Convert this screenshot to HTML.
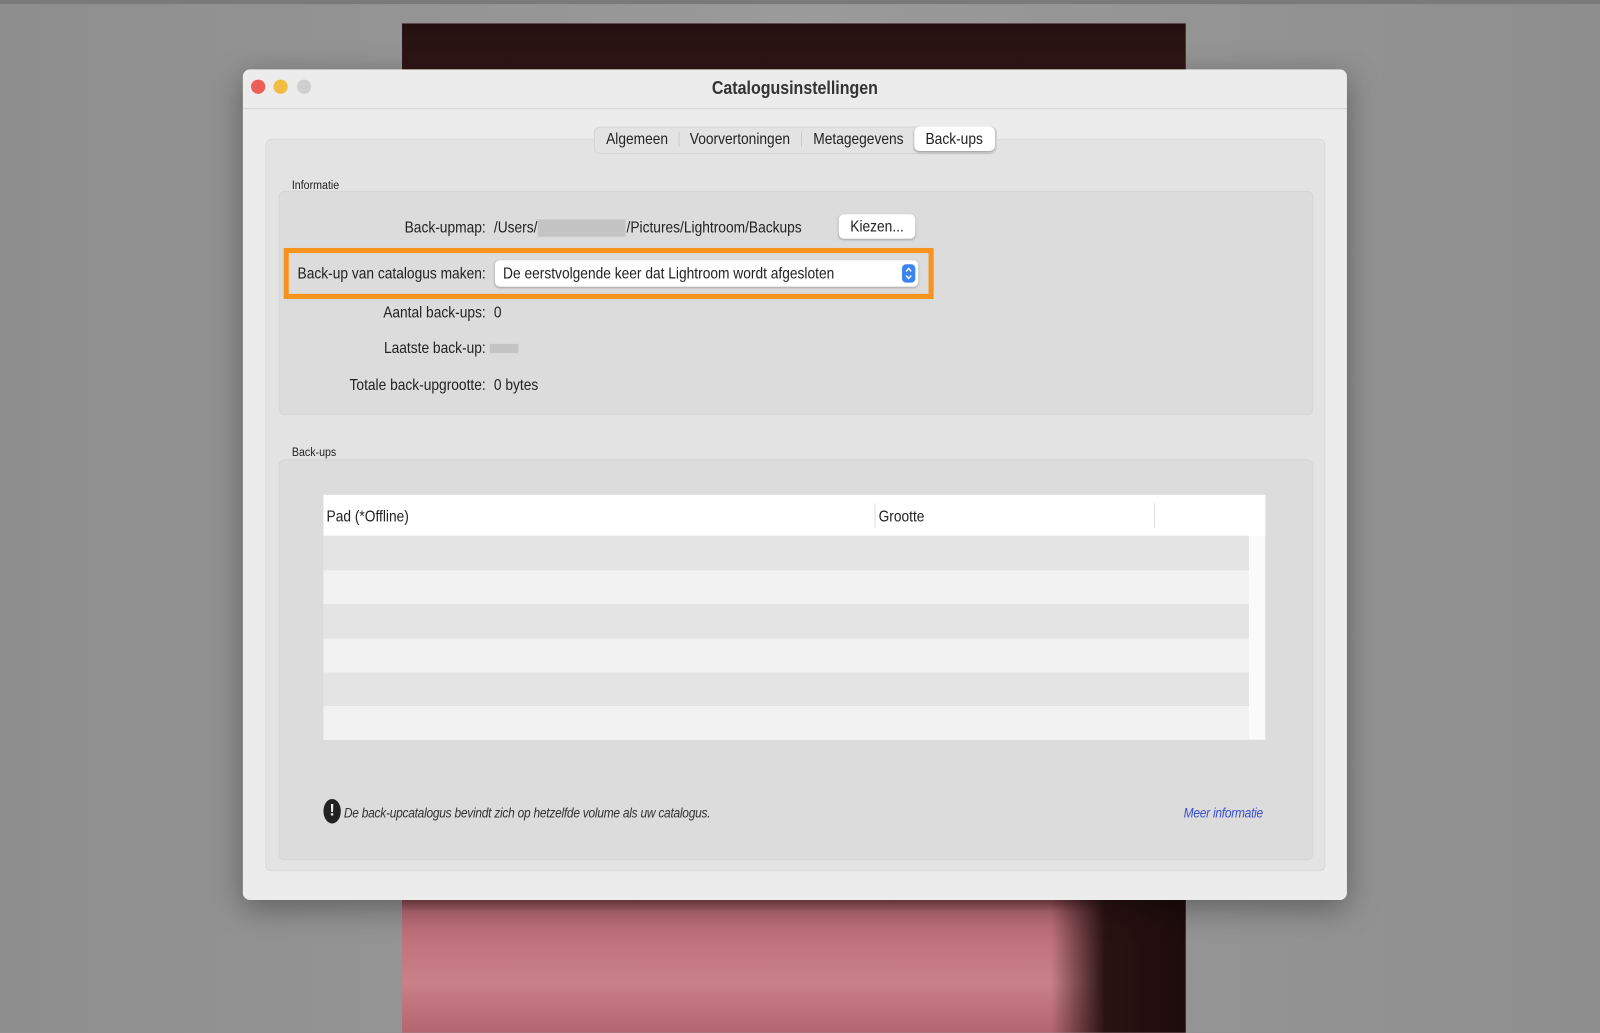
<!DOCTYPE html>
<html><head><meta charset="utf-8"><style>
html,body{margin:0;padding:0;width:1600px;height:1033px;overflow:hidden;background:#929292}
#w{position:absolute;left:0;top:0;width:1568px;height:1012px;transform:scale(1.0204);transform-origin:0 0;font-family:"Liberation Sans",sans-serif;color:#222}
.a{position:absolute}
.t{position:absolute;font-size:15.5px;white-space:nowrap;line-height:18px;transform:scaleX(.87);transform-origin:left center;margin-top:1px}
.r{transform-origin:right center;left:216px;width:260px;text-align:right}
.c{transform-origin:center center}
</style></head><body><div id="w">
<div class="a" style="left:0;top:0;width:1568px;height:1012px;background:linear-gradient(90deg,#8e8e8e,#9a9a9a 50%,#8e8e8e)"></div>
<div class="a" style="left:0;top:0;width:1568px;height:4px;background:#7a7a7a"></div>
<div class="a" style="left:394px;top:23px;width:768px;height:989px;background:linear-gradient(180deg,#241010,#3a1a1a 8%,#5a2a2e 86%,#b86a74 88%,#c98089 95%,#b46670)"></div>
<div class="a" style="left:1030px;top:882px;width:132px;height:130px;background:linear-gradient(90deg,rgba(60,20,20,0),#2a1212 40%,#1d0c0c)"></div>
<div class="a" style="left:238px;top:68px;width:1082px;height:814px;background:#ececec;border-radius:7px;box-shadow:0 8px 30px rgba(0,0,0,.35)"></div>
<div class="a" style="left:238px;top:106px;width:1082px;height:1px;background:#d4d4d4"></div>
<div class="a" style="left:246px;top:78px;width:14px;height:14px;border-radius:50%;background:#ec5f56"></div>
<div class="a" style="left:268px;top:78px;width:14px;height:14px;border-radius:50%;background:#f3bd43"></div>
<div class="a" style="left:291px;top:78px;width:14px;height:14px;border-radius:50%;background:#cfcfcf"></div>
<div class="t c" style="left:600px;width:358px;text-align:center;top:76px;font-size:18px;font-weight:bold;color:#333">Catalogusinstellingen</div>
<div class="a" style="left:260px;top:136px;width:1037px;height:716px;background:#e3e3e3;border:1px solid #dadada;border-radius:6px"></div>
<div class="a" style="left:582px;top:124px;width:393px;height:25px;background:#e3e3e3;border:1px solid #d4d4d4;border-radius:6px"></div>
<div class="a" style="left:896px;top:124px;width:79px;height:24px;background:#fff;border-radius:5px;box-shadow:0 1px 2px rgba(0,0,0,.3)"></div>
<div class="a" style="left:665px;top:129px;width:1px;height:15px;background:#ccc"></div>
<div class="a" style="left:785px;top:129px;width:1px;height:15px;background:#ccc"></div>
<div class="t" style="left:594px;top:127px">Algemeen</div>
<div class="t" style="left:676px;top:127px">Voorvertoningen</div>
<div class="t" style="left:797px;top:127px">Metagegevens</div>
<div class="t" style="left:907px;top:127px">Back-ups</div>
<div class="t" style="left:286px;top:171px;font-size:12px">Informatie</div>
<div class="a" style="left:273px;top:187px;width:1012px;height:218px;background:#dcdcdc;border:1px solid #d6d6d6;border-radius:6px"></div>
<div class="t r" style="top:214px">Back-upmap:</div>
<div class="t" style="left:484px;top:214px">/Users/</div>
<div class="a" style="left:527px;top:215px;width:86px;height:17px;background:#c4c4c4"></div>
<div class="t" style="left:614px;top:214px">/Pictures/Lightroom/Backups</div>
<div class="a" style="left:822px;top:210px;width:75px;height:24px;background:#fff;border-radius:5px;box-shadow:0 1px 2px rgba(0,0,0,.25)"></div>
<div class="t c" style="left:822px;width:75px;text-align:center;top:213px">Kiezen...</div>
<div class="a" style="left:278px;top:243px;width:627px;height:40px;border:5px solid #f7941d;background:#dcdcdc"></div>
<div class="a" style="left:485px;top:255px;width:415px;height:26px;background:#fff;border-radius:5px;box-shadow:0 1px 2px rgba(0,0,0,.25)"></div>
<div class="t r" style="top:259px">Back-up van catalogus maken:</div>
<div class="t" style="left:493px;top:259px">De eerstvolgende keer dat Lightroom wordt afgesloten</div>
<div class="a" style="left:884px;top:259px;width:13px;height:18px;background:#3a84f0;border-radius:4px"><svg width="13" height="18" viewBox="0 0 13 18"><path d="M4 7l2.5-3 2.5 3M4 11l2.5 3 2.5-3" fill="none" stroke="#fff" stroke-width="1.4"/></svg></div>
<div class="t r" style="top:297px">Aantal back-ups:</div>
<div class="t" style="left:484px;top:297px">0</div>
<div class="t r" style="top:332px">Laatste back-up:</div>
<div class="a" style="left:480px;top:337px;width:28px;height:9px;background:#c4c4c4"></div>
<div class="t r" style="top:368px">Totale back-upgrootte:</div>
<div class="t" style="left:484px;top:368px">0 bytes</div>
<div class="t" style="left:286px;top:433px;font-size:12px">Back-ups</div>
<div class="a" style="left:273px;top:450px;width:1012px;height:391px;background:#dcdcdc;border:1px solid #d6d6d6;border-radius:6px"></div>
<div class="a" style="left:317px;top:485px;width:923px;height:240px;background:#fafafa"></div>
<div class="a" style="left:317px;top:485px;width:923px;height:40px;background:#fff"></div>
<div class="a" style="left:857px;top:493px;width:1px;height:24px;background:#ddd"></div>
<div class="a" style="left:1131px;top:493px;width:1px;height:24px;background:#ddd"></div>
<div class="t" style="left:320px;top:497px">Pad (*Offline)</div>
<div class="t" style="left:861px;top:497px">Grootte</div>
<div class="a" style="left:317px;top:525px;width:907px;height:34px;background:#e4e4e4"></div>
<div class="a" style="left:317px;top:559px;width:907px;height:33px;background:#f2f2f2"></div>
<div class="a" style="left:317px;top:592px;width:907px;height:34px;background:#e4e4e4"></div>
<div class="a" style="left:317px;top:626px;width:907px;height:33px;background:#f2f2f2"></div>
<div class="a" style="left:317px;top:659px;width:907px;height:33px;background:#e4e4e4"></div>
<div class="a" style="left:317px;top:692px;width:907px;height:33px;background:#f2f2f2"></div>
<div class="a" style="left:317px;top:783px;width:17px;height:24px;border-radius:50%;background:#222;color:#eee;font-weight:bold;font-size:16px;text-align:center;line-height:24px">!</div>
<div class="t" style="left:337px;top:787px;font-size:13.5px;font-style:italic;letter-spacing:-0.3px;color:#333">De back-upcatalogus bevindt zich op hetzelfde volume als uw catalogus.</div>
<div class="t" style="left:1160px;top:787px;font-size:13.5px;font-style:italic;letter-spacing:-0.3px;color:#3a4fd0">Meer informatie</div>
</div></body></html>
